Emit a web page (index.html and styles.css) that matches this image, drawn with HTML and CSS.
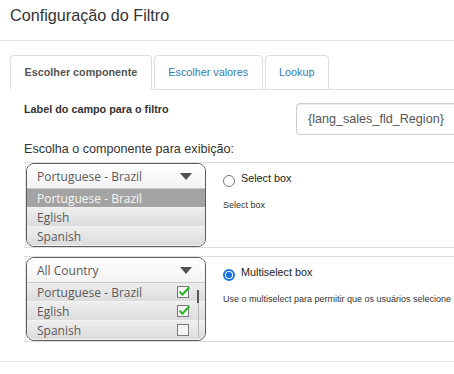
FILE: index.html
```html
<!DOCTYPE html>
<html lang="pt-BR">
<head>
<meta charset="utf-8">
<title>Configuração do Filtro</title>
<link rel="stylesheet" href="styles.css">
</head>
<body>
<div class="page">
  <h1 class="title">Configuração do Filtro</h1>
  <div class="panel">
    <ul class="tabs">
      <li class="tab active">Escolher componente</li>
      <li class="tab">Escolher valores</li>
      <li class="tab">Lookup</li>
    </ul>
    <div class="tab-content">
      <div class="field-row">
        <label class="field-label">Label do campo para o filtro</label>
        <input class="field-input" type="text" value="{lang_sales_fld_Region}">
      </div>
      <p class="section-title">Escolha o componente para exibição:</p>

      <div class="option">
        <div class="mock-cell">
          <div class="mock">
            <div class="frame">
              <div class="mock-head"><span>Portuguese - Brazil</span><span class="caret"></span></div>
              <div class="mock-list">
                <div class="mock-item selected">Portuguese - Brazil</div>
                <div class="mock-item">Eglish</div>
                <div class="mock-item">Spanish</div>
              </div>
            </div>
          </div>
        </div>
        <div class="option-info">
          <div class="radio-line"><span class="radio"></span><span>Select box</span></div>
          <div class="desc">Select box</div>
        </div>
      </div>

      <div class="option">
        <div class="mock-cell">
          <div class="mock">
            <div class="frame">
              <div class="mock-head"><span>All Country</span><span class="caret"></span></div>
              <div class="mock-list">
                <div class="mock-item"><span>Portuguese - Brazil</span>
                  <svg class="check" width="14" height="14" viewBox="0 0 14 14"><rect x="0.5" y="1.5" width="11" height="11" fill="#f4f4f4" stroke="#7a7a7a"/><path d="M2.6 6.6 L5.4 9.6 L12.4 2.2" fill="none" stroke="#1fb51f" stroke-width="2"/></svg>
                </div>
                <div class="mock-item"><span>Eglish</span>
                  <svg class="check" width="14" height="14" viewBox="0 0 14 14"><rect x="0.5" y="1.5" width="11" height="11" fill="#f4f4f4" stroke="#7a7a7a"/><path d="M2.6 6.6 L5.4 9.6 L12.4 2.2" fill="none" stroke="#1fb51f" stroke-width="2"/></svg>
                </div>
                <div class="mock-item"><span>Spanish</span>
                  <svg class="check" width="14" height="14" viewBox="0 0 14 14"><rect x="0.5" y="1.5" width="11" height="11" fill="#f4f4f4" stroke="#7a7a7a"/></svg>
                </div>
                <span class="scroll-track"></span>
                <span class="scroll-thumb"></span>
              </div>
            </div>
          </div>
        </div>
        <div class="option-info">
          <div class="radio-line"><span class="radio checked"></span><span>Multiselect box</span></div>
          <div class="desc">Use o multiselect para permitir que os usuários selecione</div>
        </div>
      </div>
    </div>
  </div>
  <div class="footer"></div>
</div>
</body>
</html>
```
FILE: styles.css
```css
html, body {
  margin: 0;
  overflow: hidden;
  background: #fff;
}
body {
  font-family: "Liberation Sans", Arial, sans-serif;
  color: #333;
}
.page {
  width: 760px;
}
.title {
  margin: 0;
  height: 40px;
  padding-left: 10px;
  font-size: 16.2px;
  font-weight: normal;
  line-height: 30px;
  color: #333;
  border-bottom: 1px solid #e5e5e5;
}
.panel {
  margin: 14px 0 0 10px;
}
.tabs {
  list-style: none;
  margin: 0;
  padding: 0;
  display: flex;
  gap: 2px;
  height: 34px;
  border-bottom: 1px solid #ddd;
}
.tab {
  height: 33px;
  padding: 0 13.5px;
  border: 1px solid #ddd;
  border-radius: 4px 4px 0 0;
  margin-bottom: -1px;
  line-height: 33px;
  font-size: 10.8px;
  color: #337ab7;
  background: #fff;
}
.tab.active {
  color: #555;
  font-weight: bold;
  border-bottom-color: #fff;
}
.tab-content {
  padding-left: 14px;
}
.field-row {
  display: flex;
  align-items: flex-start;
  padding-top: 12px;
}
.field-label {
  flex: none;
  width: 272px;
  font-weight: bold;
  font-size: 10.8px;
  line-height: 14px;
  color: #333;
}
.field-input {
  margin: 1px 0 0;
  height: 32px;
  width: 240px;
  box-sizing: border-box;
  border: 1px solid #ccc;
  border-radius: 4px;
  padding: 0 11px;
  font-family: "Liberation Sans", Arial, sans-serif;
  font-size: 12.6px;
  color: #555;
  box-shadow: inset 0 1px 1px rgba(0, 0, 0, 0.075);
}
.section-title {
  margin: 6px 0 5px;
  font-size: 12.6px;
  line-height: 16px;
  color: #333;
}
.option {
  display: flex;
  border-top: 1px solid #ddd;
  border-bottom: 1px solid #ddd;
}
.option + .option {
  margin-top: 8px;
}
.mock-cell {
  flex: none;
  padding-left: 1px;
}
.mock {
  border-left: 1px solid #e2e2e2;
}
.frame {
  width: 180px;
  height: 84px;
  box-sizing: border-box;
  border: 1px solid #5c5c5c;
  border-radius: 8px;
  overflow: hidden;
  font-family: "Open Sans", "Noto Sans", sans-serif;
  font-size: 12px;
  color: #5a5a5a;
  background: #e4e4e4;
}
.mock-head {
  display: flex;
  align-items: center;
  justify-content: space-between;
  height: 24px;
  padding: 0 13px 0 10px;
  border-bottom: 1px solid #c9c9c9;
  background: linear-gradient(#ffffff, #f3f3f3);
}
.caret {
  width: 0;
  height: 0;
  border-left: 6.5px solid transparent;
  border-right: 6.5px solid transparent;
  border-top: 7px solid #505050;
}
.mock-list {
  position: relative;
}
.mock-item {
  display: flex;
  align-items: center;
  justify-content: space-between;
  height: 18px;
  padding: 0 14px 0 10px;
  border-bottom: 1px solid #f3f3f3;
  background: linear-gradient(#eeeeee, #dcdcdc);
}
.mock-item.selected {
  background: #a3a3a3;
  color: #f7f7f7;
}
.check {
  display: block;
}
.scroll-track {
  position: absolute;
  right: 6px;
  top: 7px;
  bottom: 2px;
  width: 1px;
  background: #b8b8b8;
}
.scroll-thumb {
  position: absolute;
  right: 6px;
  top: 7px;
  width: 2px;
  height: 13px;
  background: #555;
}
.option-info {
  padding: 9px 0 0 17px;
}
.radio-line {
  display: flex;
  align-items: flex-start;
  font-size: 10.8px;
  line-height: 13px;
  color: #222;
}
.radio {
  flex: none;
  width: 12px;
  height: 12px;
  box-sizing: border-box;
  border: 1px solid #767676;
  border-radius: 50%;
  margin: 3px 6px 0 0;
  background: #fff;
}
.radio.checked {
  border: 2px solid #1a74e0;
  background: radial-gradient(circle, #1a74e0 0 2.8px, #fff 3.3px);
}
.desc {
  margin-top: 13px;
  font-size: 9px;
  line-height: 11px;
  color: #333;
  white-space: nowrap;
}
.footer {
  margin-top: 19px;
  border-top: 1px solid #e5e5e5;
}
```
